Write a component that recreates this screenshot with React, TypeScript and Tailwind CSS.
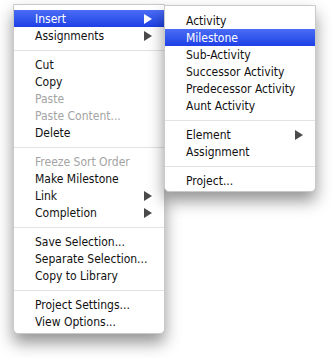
type Item = { label: string; sub?: boolean; disabled?: boolean; active?: boolean } | "sep";

const mainItems: Item[] = [
  { label: "Insert", sub: true, active: true },
  { label: "Assignments", sub: true },
  "sep",
  { label: "Cut" },
  { label: "Copy" },
  { label: "Paste", disabled: true },
  { label: "Paste Content...", disabled: true },
  { label: "Delete" },
  "sep",
  { label: "Freeze Sort Order", disabled: true },
  { label: "Make Milestone" },
  { label: "Link", sub: true },
  { label: "Completion", sub: true },
  "sep",
  { label: "Save Selection..." },
  { label: "Separate Selection..." },
  { label: "Copy to Library" },
  "sep",
  { label: "Project Settings..." },
  { label: "View Options..." },
];

const subItems: Item[] = [
  { label: "Activity" },
  { label: "Milestone", active: true },
  { label: "Sub-Activity" },
  { label: "Successor Activity" },
  { label: "Predecessor Activity" },
  { label: "Aunt Activity" },
  "sep",
  { label: "Element", sub: true },
  { label: "Assignment" },
  "sep",
  { label: "Project..." },
];

function Arrow({ active }: { active?: boolean }) {
  return (
    <svg width="8" height="10" viewBox="0 0 8 10" className="shrink-0">
      <polygon points="0,0 8,5 0,10" fill={active ? "#ffffff" : "#4a4a4a"} />
    </svg>
  );
}

function MenuList({ items }: { items: Item[] }) {
  return (
    <>
      {items.map((item, i) =>
        item === "sep" ? (
          <div key={i} className="h-[12px] flex items-center">
            <div className="h-px w-full bg-[#e2e2e2]" />
          </div>
        ) : (
          <div
            key={i}
            className={`h-[17px] flex items-center justify-between pl-[21px] pr-[12px] ${
              item.active
                ? "bg-gradient-to-b from-[#4b6cf5] to-[#1e3fe6] text-white"
                : item.disabled
                ? "text-[#a3a3a3]"
                : "text-[#111]"
            }`}
          >
            <span className="whitespace-nowrap">{item.label}</span>
            {item.sub && <Arrow active={item.active} />}
          </div>
        )
      )}
    </>
  );
}

export default function App() {
  return (
    <div className="w-[333px] h-[358px] bg-white font-['DejaVu_Sans_Condensed','DejaVu_Sans',sans-serif] text-[12px] leading-none">
      <div className="flex items-start pt-[4px] pl-[13px]">
        <div className="w-[152px] pt-[5px] pb-[3px] bg-white border border-[#c9c9c9] rounded-b-[5px] shadow-[0_9px_16px_rgba(0,0,0,0.42)]">
          <MenuList items={mainItems} />
        </div>
        <div className="relative -ml-px mt-[1px] w-[152px] pt-[6px] pb-[2px] bg-white border border-[#c9c9c9] rounded-b-[5px] shadow-[0_9px_16px_rgba(0,0,0,0.42)]">
          <MenuList items={subItems} />
        </div>
      </div>
    </div>
  );
}
